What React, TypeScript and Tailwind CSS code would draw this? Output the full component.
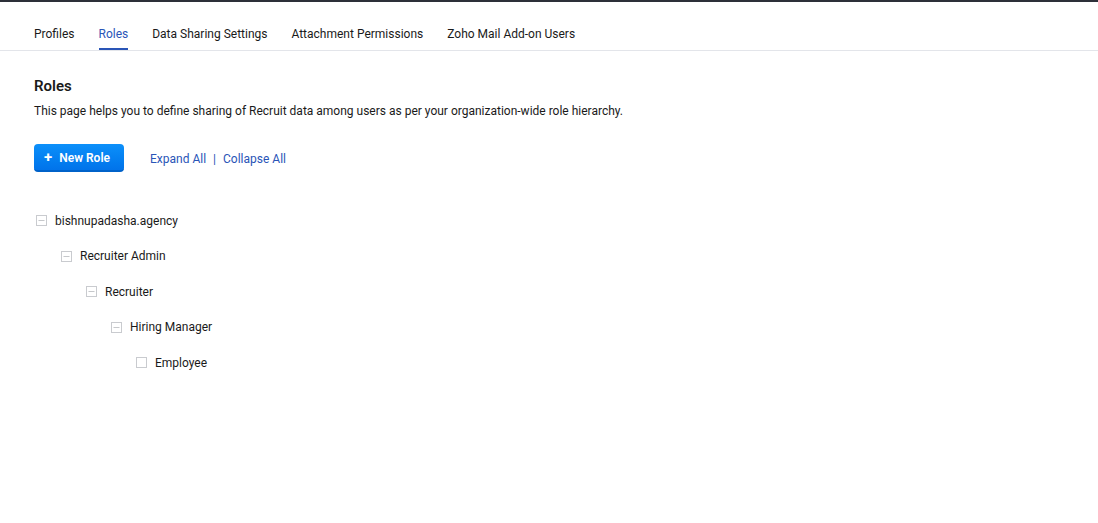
import { Minus } from 'lucide-react'

const tabs = ['Profiles', 'Roles', 'Data Sharing Settings', 'Attachment Permissions', 'Zoho Mail Add-on Users']

const tree = [
  { name: 'bishnupadasha.agency', depth: 0, open: true },
  { name: 'Recruiter Admin', depth: 1, open: true },
  { name: 'Recruiter', depth: 2, open: true },
  { name: 'Hiring Manager', depth: 3, open: true },
  { name: 'Employee', depth: 4, open: false },
]

const indent = ['pl-0', 'pl-[25px]', 'pl-[50px]', 'pl-[75px]', 'pl-[100px]']

const App = () => {
  return (
    <div className="min-h-[523px] w-full bg-white border-t-2 border-[#2d3039] font-['Roboto',sans-serif] text-[#1a1a1a]">
      {/* tabs */}
      <div className="flex gap-x-6 px-[34px] border-b border-[#e3e5ea] h-[49px] items-end">
        {tabs.map((tab) => (
          <div
            key={tab}
            className={
              tab === 'Roles'
                ? 'pb-[6px] text-[12px] leading-[16px] text-[#2a55b7] border-b-2 border-[#2a55b7]'
                : 'pb-[6px] text-[12px] leading-[16px] border-b-2 border-transparent'
            }
          >
            {tab}
          </div>
        ))}
      </div>

      <div className="px-[34px] pt-[27px]">
        <div className="text-[15px] font-semibold leading-[16px]">Roles</div>
        <div className="mt-[9px] text-[12px] leading-[16px]">
          This page helps you to define sharing of Recruit data among users as per your organization-wide role hierarchy.
        </div>

        <div className="flex items-center mt-[25px]">
          <button className="flex items-center gap-x-[7px] h-[28px] w-[90px] px-[10px] pt-[2px] rounded-[4px] bg-gradient-to-b from-[#0d90fa] to-[#0173ea] border-b-2 border-[#0062c9] text-white text-[12px] font-semibold whitespace-nowrap">
            <span className="text-[15px] leading-none font-bold -mt-[2px]">+</span>
            New Role
          </button>
          <div className="ml-[26px] mt-[2px] text-[12px] text-[#2a55b7] flex gap-x-[7px]">
            <span>Expand All</span>
            <span>|</span>
            <span>Collapse All</span>
          </div>
        </div>

        <div className="mt-[31px] flex flex-col">
          {tree.map((node) => (
            <div key={node.name} className={`flex items-center h-[35.5px] ${indent[node.depth]}`}>
              <span className="mx-[2px] w-[11px] h-[11px] border border-[#c9cbcf] flex items-center justify-center">
                {node.open && <Minus size={9} strokeWidth={1.5} className="text-[#9a9da3]" />}
              </span>
              <span className="ml-[6px] text-[12px]">{node.name}</span>
            </div>
          ))}
        </div>
      </div>
    </div>
  )
}

export default App
